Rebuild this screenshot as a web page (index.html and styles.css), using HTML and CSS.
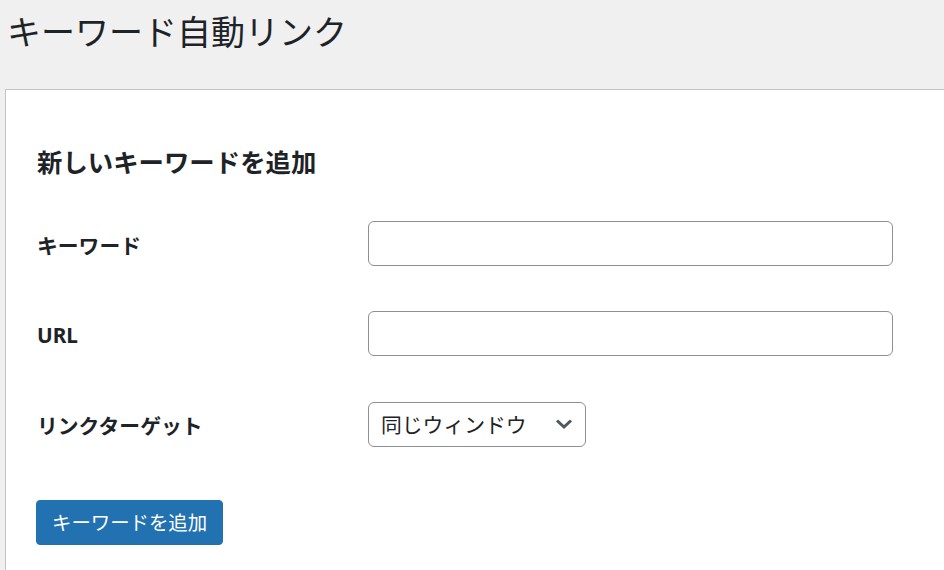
FILE: index.html
```html
<!DOCTYPE html>
<html lang="ja">
<head>
<meta charset="utf-8">
<title>キーワード自動リンク</title>
<link rel="stylesheet" href="styles.css">
</head>
<body>
<div class="wrap">
  <h1 class="page-title">キーワード自動リンク</h1>
  <div class="panel">
    <h2 class="panel-title">新しいキーワードを追加</h2>
    <form class="form">
      <label class="label" for="kw">キーワード</label>
      <input class="field" id="kw" type="text">
      <label class="label" for="url">URL</label>
      <input class="field" id="url" type="text">
      <label class="label" for="target">リンクターゲット</label>
      <div class="select">
        <span class="select-value">同じウィンドウ</span>
        <svg class="chev" width="18" height="12" viewBox="0 0 18 12"><path d="M2 2.5 L9 9 L16 2.5" fill="none" stroke="#50575e" stroke-width="3"/></svg>
      </div>
    </form>
    <button class="btn" type="button">キーワードを追加</button>
  </div>
</div>
</body>
</html>
```
FILE: styles.css
```css
html, body {
  margin: 0;
  padding: 0;
  background: #f0f0f1;
  overflow: hidden;
}
.wrap {
  font-family: "Noto Sans", "Noto Sans CJK JP", sans-serif;
  color: #1d2327;
  width: 944px;
  height: 570px;
  overflow: hidden;
}
.page-title {
  margin: 0;
  padding: 10px 0 0 7px;
  font-size: 34px;
  font-weight: 400;
  line-height: 44px;
  height: 79px;
  box-sizing: border-box;
}
.panel {
  margin: 10px 0 0 5px;
  background: #fff;
  border: 1px solid #c3c4c7;
  border-right: none;
  padding: 40px 0 40px 31px;
  height: 600px;
}
.panel-title {
  margin: 0;
  font-size: 25.4px;
  font-weight: 700;
  line-height: 64px;
}
.form {
  display: grid;
  grid-template-columns: 331px 525px;
  grid-auto-rows: 45px;
  row-gap: 45px;
  align-items: center;
  margin-top: 27px;
}
.label {
  font-size: 20.8px;
  font-weight: 700;
  padding-top: 2px;
}
.field {
  box-sizing: border-box;
  height: 45px;
  width: 525px;
  border: 1px solid #8c8f94;
  border-radius: 6px;
  background: #fff;
  margin: 0;
}
.select {
  box-sizing: border-box;
  width: 218px;
  height: 45px;
  border: 1px solid #8c8f94;
  border-radius: 6px;
  display: flex;
  align-items: center;
  justify-content: space-between;
  padding: 0 12px 0 12px;
  font-size: 20.8px;
  margin-top: 1px;
}
.chev {
  display: block;
}
.btn {
  margin-top: 54px;
  margin-left: -1px;
  height: 45px;
  padding: 0 15px;
  background: #2271b1;
  border: 1px solid #2271b1;
  border-radius: 4px;
  color: #fff;
  font-family: inherit;
  font-size: 19.4px;
  line-height: 1;
}
```
